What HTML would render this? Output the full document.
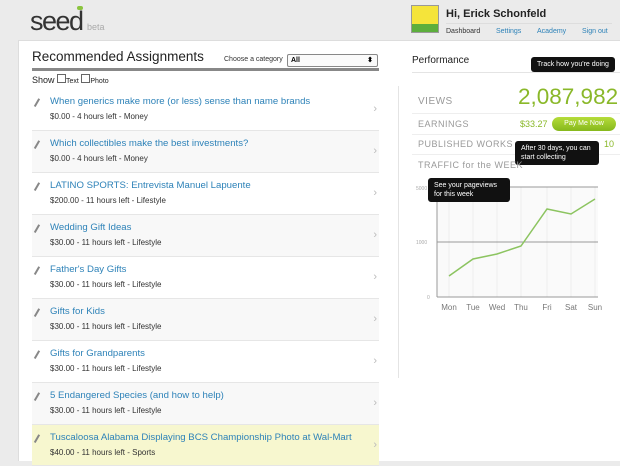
<!DOCTYPE html>
<html><head><style>
body{margin:0;width:620px;height:460px;overflow:hidden;background:#ebebeb;font-family:"Liberation Sans",sans-serif;position:relative}
.a{position:absolute}
.panel{left:18px;top:40px;width:602px;height:420px;background:#fff;border-left:1px solid #ddd;border-top:1px solid #ddd}
.row{position:absolute;left:32px;width:347px;height:41px;border-bottom:1px solid #e6e6e6}
.row .t{position:absolute;left:18px;top:7px;font-size:9.6px;color:#2d82b8;white-space:nowrap}
.row .s{position:absolute;left:18px;top:23px;font-size:8px;color:#333;white-space:nowrap}
.row .p{position:absolute;left:4px;top:9px;width:1.5px;height:9px;background:#888;transform:rotate(30deg)}
.row .c{position:absolute;right:2px;top:14px;font-size:11px;color:#bbb}
.lab{font-size:9px;color:#999;letter-spacing:.5px}
.tip{background:#111;color:#fff;font-size:7px;border-radius:3px;padding:3px 6px;line-height:9px}
</style></head><body>
<div class="a" style="left:30px;top:6px;font-size:27px;color:#333;letter-spacing:-1.5px">seed</div>
<div class="a" style="left:87px;top:22px;font-size:9px;color:#aaa">beta</div>
<div class="a" style="left:77px;top:6px;width:6px;height:4px;background:#8bc43f;border-radius:3px"></div>
<div class="a" style="left:411px;top:5px;width:26px;height:26px;border:1px solid #999;background:linear-gradient(#f5e43a 70%,#5cae3c 70%)"></div>
<div class="a" style="left:446px;top:8px;font-size:11px;font-weight:bold;color:#222">Hi, Erick Schonfeld</div>
<div class="a" style="left:446px;top:23px;width:166px;border-top:1px solid #ddd"></div>
<div class="a" style="left:446px;top:28px;font-size:7px;color:#333">Dashboard</div>
<div class="a" style="left:496px;top:28px;font-size:7px;color:#2d82b8">Settings</div>
<div class="a" style="left:537px;top:28px;font-size:7px;color:#2d82b8">Academy</div>
<div class="a" style="left:582px;top:28px;font-size:7px;color:#2d82b8">Sign out</div>
<div class="a panel"></div>
<div class="a" style="left:32px;top:49px;font-size:13.5px;color:#222">Recommended Assignments</div>
<div class="a" style="left:224px;top:56px;font-size:7px;color:#333;white-space:nowrap">Choose a category</div>
<div class="a" style="left:287px;top:54px;width:86px;height:11px;border:1px solid #888;border-radius:2px;font-size:7px;font-weight:bold;line-height:11px;padding-left:3px;background:#fafafa">All<span style="float:right;margin-right:4px">⬍</span></div>
<div class="a" style="left:32px;top:68px;width:347px;height:3px;background:#888"></div>
<div class="a" style="left:32px;top:74px;font-size:9px;color:#222">Show <span style="display:inline-block;width:7px;height:7px;border:1px solid #666"></span><span style="font-size:7px">Text</span> <span style="display:inline-block;width:7px;height:7px;border:1px solid #666"></span><span style="font-size:7px">Photo</span></div>

<div class="row" style="top:89px"><i class="p"></i><div class="t">When generics make more (or less) sense than name brands</div><div class="s">$0.00 - 4 hours left - Money</div><div class="c">›</div></div>
<div class="row" style="top:131px;background:#f8f8f8"><i class="p"></i><div class="t">Which collectibles make the best investments?</div><div class="s">$0.00 - 4 hours left - Money</div><div class="c">›</div></div>
<div class="row" style="top:173px"><i class="p"></i><div class="t">LATINO SPORTS: Entrevista Manuel Lapuente</div><div class="s">$200.00 - 11 hours left - Lifestyle</div><div class="c">›</div></div>
<div class="row" style="top:215px;background:#f8f8f8"><i class="p"></i><div class="t">Wedding Gift Ideas</div><div class="s">$30.00 - 11 hours left - Lifestyle</div><div class="c">›</div></div>
<div class="row" style="top:257px"><i class="p"></i><div class="t">Father's Day Gifts</div><div class="s">$30.00 - 11 hours left - Lifestyle</div><div class="c">›</div></div>
<div class="row" style="top:299px;background:#f8f8f8"><i class="p"></i><div class="t">Gifts for Kids</div><div class="s">$30.00 - 11 hours left - Lifestyle</div><div class="c">›</div></div>
<div class="row" style="top:341px"><i class="p"></i><div class="t">Gifts for Grandparents</div><div class="s">$30.00 - 11 hours left - Lifestyle</div><div class="c">›</div></div>
<div class="row" style="top:383px;background:#f8f8f8"><i class="p"></i><div class="t">5 Endangered Species (and how to help)</div><div class="s">$30.00 - 11 hours left - Lifestyle</div><div class="c">›</div></div>
<div class="row" style="top:425px;background:#f7f7cf;height:40px"><i class="p"></i><div class="t">Tuscaloosa Alabama Displaying BCS Championship Photo at Wal-Mart</div><div class="s">$40.00 - 11 hours left - Sports</div><div class="c">›</div></div>

<div class="a" style="left:398px;top:86px;width:1px;height:292px;background:#e4e4e4"></div>
<div class="a" style="left:412px;top:55px;font-size:10px;color:#222">Performance</div>
<div class="a" style="left:412px;top:72px;width:208px;border-top:1px solid #e4e4e4"></div>
<div class="a tip" style="left:531px;top:57px;font-size:7px">Track how you're doing</div>
<div class="a" style="left:412px;top:113px;width:208px;border-top:1px solid #eee"></div>
<div class="a" style="left:412px;top:134px;width:208px;border-top:1px solid #eee"></div>
<div class="a" style="left:412px;top:154px;width:208px;border-top:1px solid #eee"></div>
<div class="a lab" style="left:418px;top:96px;font-size:10px">VIEWS</div>
<div class="a" style="left:518px;top:84px;font-size:22.5px;color:#8ab829">2,087,982</div>
<div class="a lab" style="left:418px;top:119px">EARNINGS</div>
<div class="a" style="left:520px;top:119px;font-size:9px;color:#8ab829">$33.27</div>
<div class="a" style="left:552px;top:117px;width:64px;height:14px;border-radius:7px;background:linear-gradient(#b5dc3a,#86b81c);color:#fff;font-size:7px;text-align:center;line-height:14px">Pay Me Now</div>
<div class="a lab" style="left:418px;top:139px">PUBLISHED WORKS</div>
<div class="a" style="left:604px;top:139px;font-size:9px;color:#8ab829">10</div>
<div class="a tip" style="left:515px;top:141px;width:72px">After 30 days, you can start collecting</div>
<div class="a lab" style="left:418px;top:160px">TRAFFIC for the WEEK</div>
<div class="a" style="left:437px;top:187px;width:161px;height:110px;background:#fafafa"></div>
<svg class="a" style="left:400px;top:180px" width="220" height="140">
<g stroke="#eee"><line x1="49" y1="7" x2="49" y2="117"/><line x1="73" y1="7" x2="73" y2="117"/><line x1="97" y1="7" x2="97" y2="117"/><line x1="121" y1="7" x2="121" y2="117"/><line x1="147" y1="7" x2="147" y2="117"/><line x1="171" y1="7" x2="171" y2="117"/><line x1="195" y1="7" x2="195" y2="117"/></g>
<g stroke="#999"><line x1="37" y1="7" x2="198" y2="7"/><line x1="37" y1="62" x2="198" y2="62"/><line x1="37" y1="117" x2="198" y2="117"/><line x1="37" y1="7" x2="37" y2="117"/></g>
<polyline points="49,96 73,79 97,74 121,66 147,29 171,34 195,19" fill="none" stroke="#8cc460" stroke-width="1.5"/>
<g font-size="5" fill="#aaa" font-family="Liberation Sans"><text x="16" y="10">5000</text><text x="16" y="64">1000</text><text x="27" y="119">0</text></g>
<g font-size="8" fill="#777" font-family="Liberation Sans" text-anchor="middle"><text x="49" y="130">Mon</text><text x="73" y="130">Tue</text><text x="97" y="130">Wed</text><text x="121" y="130">Thu</text><text x="147" y="130">Fri</text><text x="171" y="130">Sat</text><text x="195" y="130">Sun</text></g>
</svg>
<div class="a tip" style="left:428px;top:178px;width:70px">See your pageviews for this week</div>
</body></html>
